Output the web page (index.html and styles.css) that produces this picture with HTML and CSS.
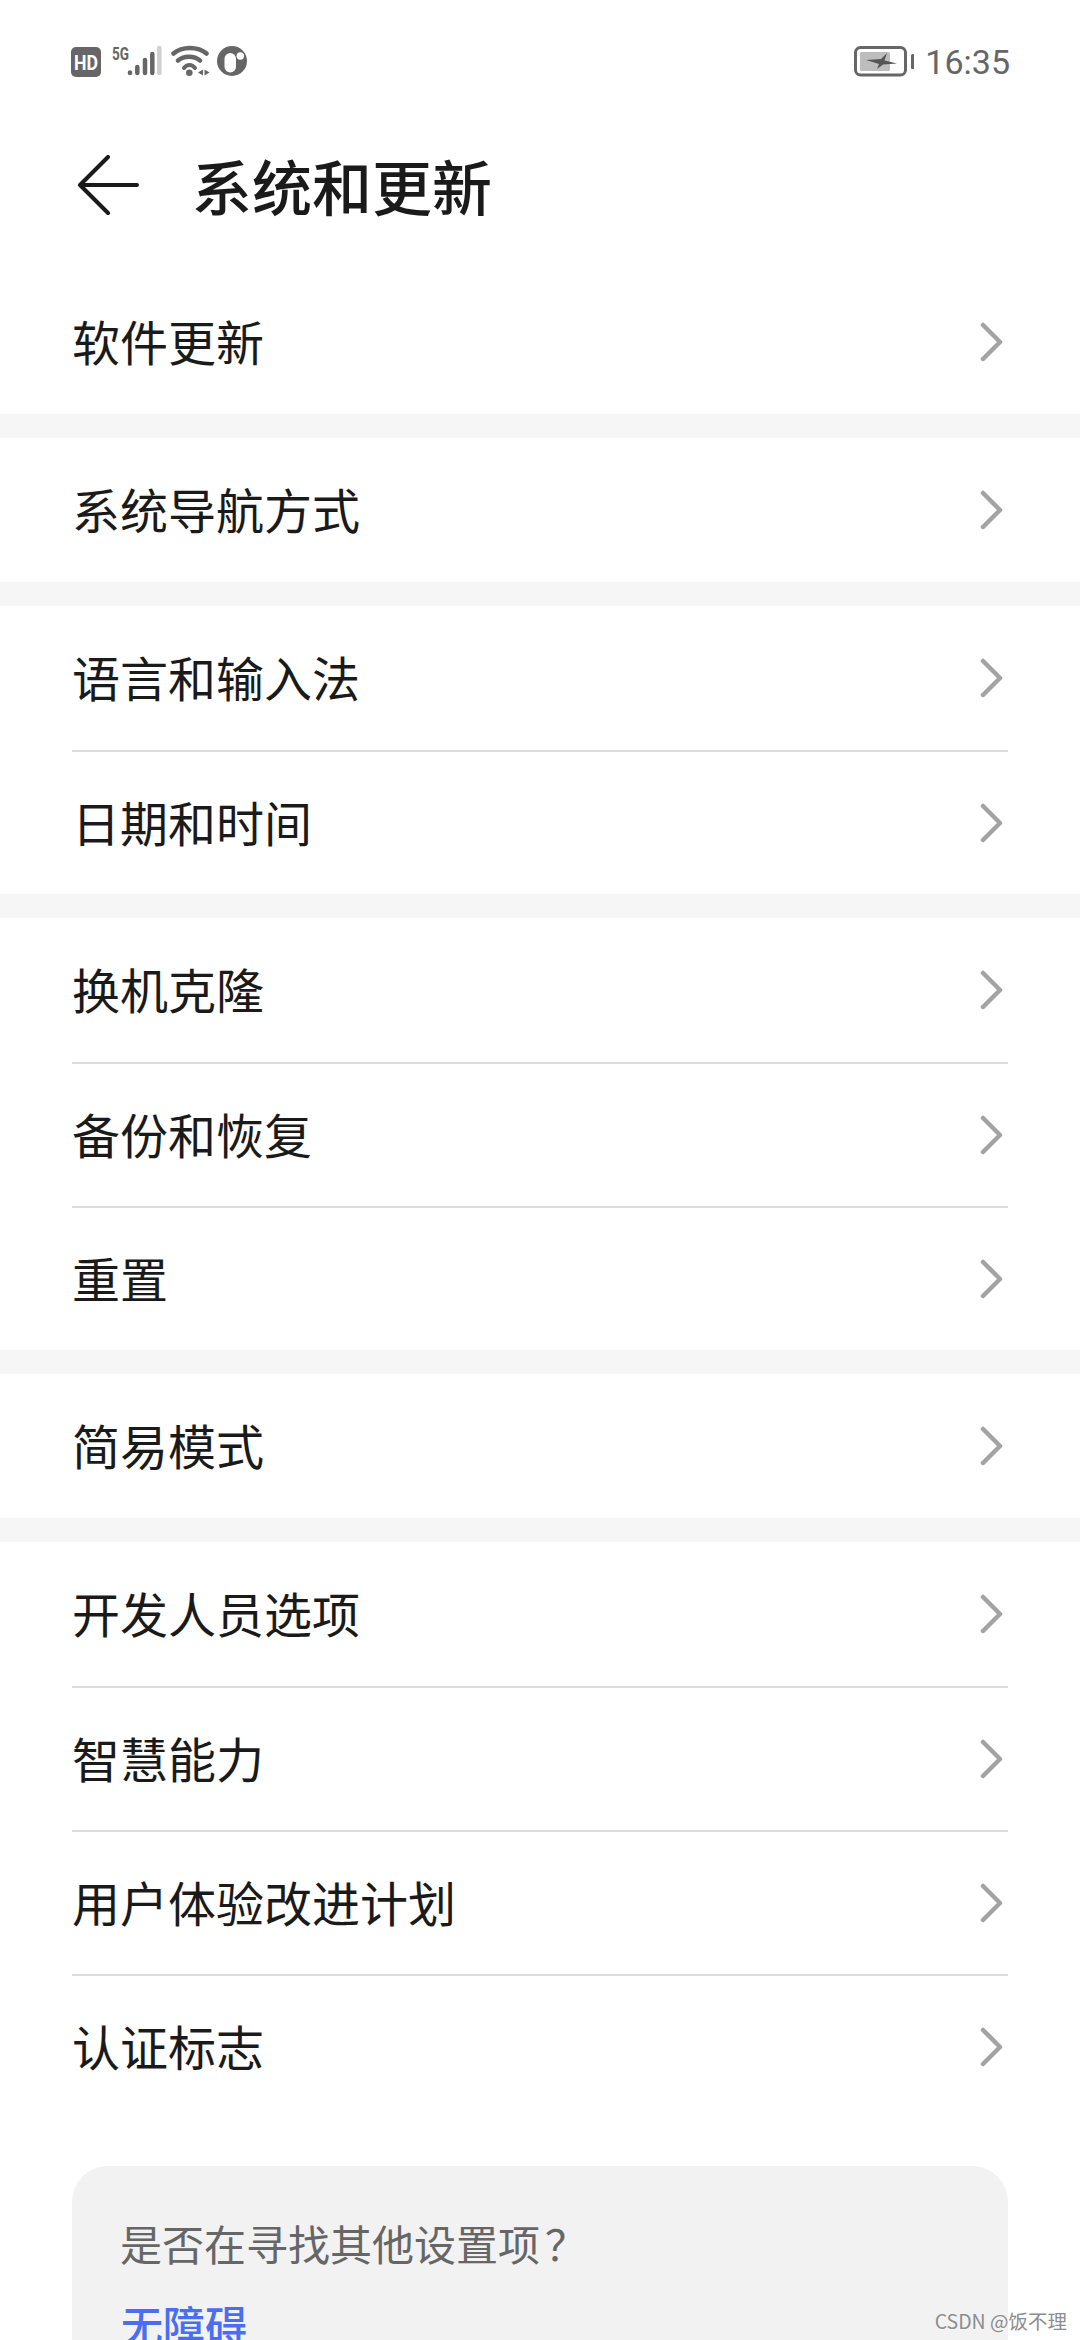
FILE: index.html
```html
<!DOCTYPE html>
<html lang="zh">
<head>
<meta charset="utf-8">
<title>系统和更新</title>
<link rel="stylesheet" href="styles.css">
</head>
<body>
<div class="screen">
  <div class="status">
    <div class="status-left">
      <svg class="ic-hd" width="30" height="30" viewBox="0 0 30 30"><rect width="30" height="30" rx="5" fill="#666"/><text x="3" y="22.500" textLength="24" lengthAdjust="spacingAndGlyphs" class="hd-text">HD</text></svg>
      <svg class="ic-signal" width="50" height="32" viewBox="0 0 50 32"><text x="0" y="15" textLength="17" lengthAdjust="spacingAndGlyphs" class="fiveg">5G</text><g stroke-width="4.500" stroke-linecap="round" fill="none"><path d="M18 27.500v.500M25.300 22v6M33 15v13M40.300 9v19" stroke="#666"/><path d="M47.300 3v25" stroke="#d0d0d0"/></g></svg>
      <svg class="ic-wifi" width="40" height="32" viewBox="0 0 40 32"><g fill="none" stroke="#666" stroke-width="4.500" stroke-linecap="round"><path d="M2.500 8.500C11 1 27 1 35.500 8.500"/><path d="M7 15.500C13 10.500 23 10.500 29 15.500"/></g><path d="M13 23C16 19 21 19 24 23" fill="none" stroke="#666" stroke-width="4" stroke-linecap="round"/><circle cx="18.300" cy="27.700" r="3.300" fill="#666"/><path d="M32 24.500v6l-5-3zM33.500 24.500v6l5-3z" fill="#666"/></svg>
      <svg class="ic-dot" width="30" height="30" viewBox="0 0 30 30"><circle cx="15" cy="15" r="15" fill="#666"/><rect x="7.500" y="7" width="11.500" height="19.500" rx="5.750" fill="#fff"/><circle cx="23.300" cy="10" r="3.700" fill="#fff"/></svg>
    </div>
    <div class="status-right">
      <svg class="ic-batt" width="60" height="32" viewBox="0 0 60 32"><rect x="1.500" y="1.500" width="50" height="27.500" rx="5" fill="none" stroke="#666" stroke-width="3"/><rect x="6" y="6" width="30" height="19" rx="1.500" fill="#bdbdbd"/><path d="M12 14 27 13 33 7 30.500 14.500 43 17.500 29 18.500 23 23 25 18z" fill="#555"/><rect x="57" y="8" width="3.500" height="15" rx="1.500" fill="#666"/></svg>
      <span class="time">16:35</span>
    </div>
  </div>

  <header class="topbar">
    <svg class="back" width="64" height="64" viewBox="0 0 64 64"><path d="M60 30H3M31 2 3 30l28 28" fill="none" stroke="#1a1a1a" stroke-width="4" stroke-linecap="round" stroke-linejoin="round"/></svg>
    <h1 class="title">系统和更新</h1>
  </header>

  <section class="group"><a class="row"><span class="label">软件更新</span><svg class="chev" width="24" height="40" viewBox="0 0 24 40"><path d="M3 3l17 17L3 37"/></svg></a></section>

  <section class="group"><a class="row"><span class="label">系统导航方式</span><svg class="chev" width="24" height="40" viewBox="0 0 24 40"><path d="M3 3l17 17L3 37"/></svg></a></section>

  <section class="group">
    <a class="row"><span class="label">语言和输入法</span><svg class="chev" width="24" height="40" viewBox="0 0 24 40"><path d="M3 3l17 17L3 37"/></svg></a>
    <a class="row"><span class="label">日期和时间</span><svg class="chev" width="24" height="40" viewBox="0 0 24 40"><path d="M3 3l17 17L3 37"/></svg></a>
  </section>

  <section class="group">
    <a class="row"><span class="label">换机克隆</span><svg class="chev" width="24" height="40" viewBox="0 0 24 40"><path d="M3 3l17 17L3 37"/></svg></a>
    <a class="row"><span class="label">备份和恢复</span><svg class="chev" width="24" height="40" viewBox="0 0 24 40"><path d="M3 3l17 17L3 37"/></svg></a>
    <a class="row"><span class="label">重置</span><svg class="chev" width="24" height="40" viewBox="0 0 24 40"><path d="M3 3l17 17L3 37"/></svg></a>
  </section>

  <section class="group"><a class="row"><span class="label">简易模式</span><svg class="chev" width="24" height="40" viewBox="0 0 24 40"><path d="M3 3l17 17L3 37"/></svg></a></section>

  <section class="group">
    <a class="row"><span class="label">开发人员选项</span><svg class="chev" width="24" height="40" viewBox="0 0 24 40"><path d="M3 3l17 17L3 37"/></svg></a>
    <a class="row"><span class="label">智慧能力</span><svg class="chev" width="24" height="40" viewBox="0 0 24 40"><path d="M3 3l17 17L3 37"/></svg></a>
    <a class="row"><span class="label">用户体验改进计划</span><svg class="chev" width="24" height="40" viewBox="0 0 24 40"><path d="M3 3l17 17L3 37"/></svg></a>
    <a class="row"><span class="label">认证标志</span><svg class="chev" width="24" height="40" viewBox="0 0 24 40"><path d="M3 3l17 17L3 37"/></svg></a>
  </section>

  <aside class="card">
    <p class="card-q">是否在寻找其他设置项<span class="qmark">？</span></p>
    <p class="card-link">无障碍</p>
  </aside>

  <div class="watermark">CSDN @饭不理</div>
</div>
</body>
</html>
```
FILE: styles.css
```css
* { box-sizing: border-box; margin: 0; padding: 0; }
html, body { width: 1080px; height: 2340px; overflow: hidden; background: #fff; }
body { font-family: "Noto Sans CJK SC", "Noto Sans", sans-serif; color: #1a1a1a; }
.screen { position: relative; width: 1080px; height: 2340px; overflow: hidden; background: #fff; }

.status { height: 124px; padding: 45px 70px 0 71px; display: flex; justify-content: space-between; align-items: flex-start; }
.status-left { display: flex; align-items: flex-start; }
.status-right { display: flex; align-items: flex-start; }
.ic-hd { margin-top: 2px; }
.hd-text { font: 700 20px "Roboto", sans-serif; fill: #fff; }
.fiveg { font: 700 18px "Roboto", sans-serif; fill: #666; }
.ic-signal { margin-left: 11px; overflow: visible; }
.ic-wifi { margin-left: 9px; }
.ic-dot { margin-left: 6px; margin-top: 1px; }
.ic-batt { margin-top: 1px; }
.time { font: 400 34px/34px "Roboto", sans-serif; color: #666; margin-left: 11px; }

.topbar { height: 146px; padding-left: 77px; display: flex; align-items: flex-start; }
.back { margin-top: 31px; }
.title { font-size: 60px; font-weight: 500; line-height: 84px; margin-left: 51px; margin-top: 19px; color: #1a1a1a; }

.group + .group { border-top: 24px solid #f6f6f6; }
.row { height: 144px; margin: 0 72px; display: flex; align-items: center; justify-content: space-between; }
.row + .row { border-top: 2px solid #dcdcdc; }
.label { font-size: 48px; font-weight: 400; line-height: 68px; color: #1a1a1a; margin-top: -4px; }
.chev { margin-right: 4px; flex: none; }
.chev path { fill: none; stroke: #a3a3a3; stroke-width: 4.500; stroke-linecap: round; stroke-linejoin: round; }

.card { margin: 48px 72px 0; height: 300px; border-radius: 36px; background: #f2f2f2; padding: 48px; }
.card-q { font-size: 42px; line-height: 58px; color: #666; }
.qmark { padding-left: 5px; }
.card-link { font-size: 42px; font-weight: 500; line-height: 58px; color: #4a6ef0; margin-top: 23px; padding-left: 1px; }
.watermark { position: absolute; right: 13px; bottom: 6px; font-size: 19.500px; line-height: 26px; color: #8c8c8c; text-shadow: 0 1px 1px rgba(255,255,255,.6); }
```
